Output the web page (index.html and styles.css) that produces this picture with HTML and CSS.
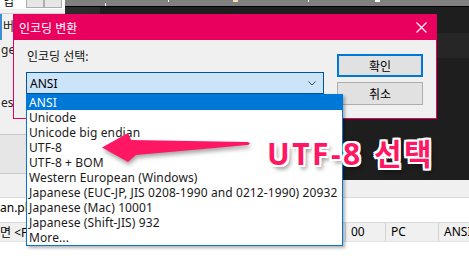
FILE: index.html
```html
<!DOCTYPE html>
<html lang="ko">
<head>
    <meta charset="UTF-8">
    <title>인코딩 변환</title>
    <link rel="stylesheet" href="styles.css">
</head>
<body>
    <div class="screen">
        <div class="workspace">
            <aside class="sidebar">
                <div class="sb-top">
                    <span class="sb-tab">업</span>
                    <span class="sb-btn"></span>
                    <span class="sb-btn"></span>
                </div>
                <div class="sb-bar"></div>
                <div class="sb-item sb-sel">버</div>
                <div class="sb-item">ges</div>
                <div class="sb-item sb-low">es</div>
                <div class="sb-split"></div>
                <div class="sb-rest"></div>
            </aside>
            <section class="editor">
                <div class="ruler"></div>
                <div class="code">
                    <div class="gutter"></div>
                    <div class="lines">
                        <div class="line"></div>
                        <div class="line line-current"></div>
                    </div>
                </div>
            </section>
        </div>
        <div class="tabstrip"></div>
        <div class="filebar"><span>an.php</span></div>
        <div class="statusbar">
            <span class="st-left">면 &lt;F</span>
            <span class="st-cell st-pos">00</span>
            <span class="st-cell st-eol">PC</span>
            <span class="st-cell st-enc">ANSI</span>
        </div>
    </div>

    <div class="dialog">
        <div class="dlg-title">
            <span>인코딩 변환</span>
            <svg class="dlg-close" width="11" height="11" viewBox="0 0 11 11">
                <path d="M0.5 0.5 L10.5 10.5 M10.5 0.5 L0.5 10.5" stroke="#fff" stroke-width="1.1" fill="none"/>
            </svg>
        </div>
        <div class="dlg-body">
            <div class="dlg-main">
                <div class="dlg-label">인코딩 선택:</div>
                <div class="combo">
                    <span>ANSI</span>
                    <svg class="combo-arrow" width="8" height="5" viewBox="0 0 8 5">
                        <path d="M0.5 0.5 L4 4 L7.5 0.5" stroke="#444" stroke-width="1" fill="none"/>
                    </svg>
                </div>
            </div>
            <div class="dlg-actions">
                <button class="btn btn-default">확인</button>
                <button class="btn">취소</button>
            </div>
        </div>
    </div>

    <ul class="dropdown">
        <li class="selected">ANSI</li>
        <li>Unicode</li>
        <li>Unicode big endian</li>
        <li>UTF-8</li>
        <li>UTF-8 + BOM</li>
        <li>Western European (Windows)</li>
        <li>Japanese (EUC-JP, JIS 0208-1990 and 0212-1990) 20932</li>
        <li>Japanese (Mac) 10001</li>
        <li>Japanese (Shift-JIS) 932</li>
        <li>More...</li>
    </ul>

    <svg class="arrow" width="160" height="45" viewBox="95 125 160 45">
        <path d="M102 147.5 L128 133 L131 140 L248 142 L250 143.5 L248 145 L136 155 L128 162 Z" fill="#ff1763"/>
    </svg>

    <div class="callout">UTF-8 선택</div>
</body>
</html>
```

FILE: styles.css
```css
body {
    margin: 0;
    width: 469px;
    height: 266px;
    overflow: hidden;
    position: relative;
    background: #fff;
    font-family: "Noto Sans", "Noto Sans CJK KR", sans-serif;
    font-size: 12px;
    color: #000;
}
.screen {
    display: flex;
    flex-direction: column;
    height: 100%;
}
.workspace {
    display: flex;
    height: 180px;
}

/* left panel of the host app */
.sidebar {
    width: 65px;
    display: flex;
    flex-direction: column;
    background: #f0f0f0;
    overflow: hidden;
}
.sb-top {
    height: 9px;
    display: flex;
    align-items: flex-end;
    background: #fff;
    overflow: hidden;
}
.sb-tab {
    width: 26px;
    height: 9px;
    line-height: 4px;
    padding-left: 3px;
    box-sizing: border-box;
    overflow: hidden;
}
.sb-btn {
    width: 18px;
    height: 8px;
    margin-bottom: 1px;
    background: #e6e6e6;
    border: 1px solid #adadad;
    border-top: none;
    box-sizing: border-box;
}
.sb-bar {
    height: 5px;
    border-bottom: 1px solid #d0d0d0;
    box-sizing: border-box;
}
.sb-item {
    height: 20px;
    line-height: 20px;
    padding-left: 1px;
    color: #222;
}
.sb-sel {
    height: 26px;
    line-height: 26px;
    border-left: 2px solid #3c8dd6;
}
.sb-low {
    margin-top: 34px;
    height: 17px;
    line-height: 17px;
}
.sb-split {
    margin-top: 23px;
    height: 38px;
    background: #e6e6e6;
    border-top: 1px solid #c8c8c8;
    border-bottom: 1px solid #c8c8c8;
}
.sb-rest {
    flex: 1;
}

/* dark editor */
.editor {
    flex: 1;
    display: flex;
    flex-direction: column;
    background: #1e1e1e;
}
.ruler {
    height: 6px;
    border-bottom: 1px solid #000;
    background-color: #808080;
    background-image:
        linear-gradient(#fff, #fff),
        linear-gradient(#fff, #fff),
        linear-gradient(#ffd9a8, #ffd9a8),
        linear-gradient(#fff, #fff),
        linear-gradient(#fff, #fff);
    background-size: 1px 3px, 1px 2px, 5px 2px, 1px 2px, 5px 2px;
    background-position: 40px 3px, 103px 0, 168px 0, 243px 0, 310px 0;
    background-repeat: no-repeat;
}
.code {
    flex: 1;
    display: flex;
}
.gutter {
    width: 35px;
    background: #2b2b2b;
}
.lines {
    flex: 1;
    overflow: hidden;
}
.line {
    height: 26px;
}
.line-current {
    height: 25px;
    background: #262626;
}

/* bottom strips */
.tabstrip {
    height: 17px;
    background: #f0f0f0;
    border-bottom: 1px solid #dadada;
}
.filebar {
    height: 24px;
    line-height: 20px;
    background: #fff;
    white-space: nowrap;
}
.statusbar {
    height: 18px;
    display: flex;
    align-items: center;
    background: #f0f0f0;
    border-top: 1px solid #d9d9d9;
    border-bottom: 1px solid #e3e3e3;
    white-space: nowrap;
}
.st-left {
    flex: 1;
}
.st-cell {
    height: 100%;
    line-height: 18px;
    padding-left: 5px;
    border-left: 1px solid #d2d2d2;
    box-sizing: border-box;
}
.st-pos { width: 40px; }
.st-eol { width: 53px; }
.st-enc { width: 31px; }

/* dialog window floating over the app */
.dialog {
    position: absolute;
    left: 13px;
    top: 14px;
    width: 424px;
    height: 105px;
    box-sizing: border-box;
    border: 1px solid #e9005e;
    display: flex;
    flex-direction: column;
}
.dlg-title {
    height: 25px;
    background: #e9005e;
    color: #fff;
    display: flex;
    align-items: center;
    justify-content: space-between;
    padding: 0 9px 0 5px;
}
.dlg-close {
    display: block;
}
.dlg-body {
    flex: 1;
    background: #f0f0f0;
    display: flex;
    gap: 13px;
    padding: 9px 13px 0 12px;
}
.dlg-main {
    flex: 1;
}
.dlg-label {
    height: 16px;
    line-height: 16px;
    margin-bottom: 7px;
    padding-left: 1px;
    color: #111;
}
.combo {
    height: 22px;
    box-sizing: border-box;
    border: 1px solid #005499;
    background: #cce4f7;
    display: flex;
    align-items: center;
    justify-content: space-between;
    padding: 0 7px 0 3px;
}
.dlg-actions {
    width: 86px;
    margin-top: 5px;
    display: flex;
    flex-direction: column;
    gap: 5px;
}
.btn {
    height: 23px;
    padding: 0;
    background: #e1e1e1;
    border: 1px solid #adadad;
    font-family: inherit;
    font-size: 12px;
    color: #000;
}
.btn-default {
    border: 2px solid #0078d7;
}

/* open combo list */
.dropdown {
    position: absolute;
    left: 26px;
    top: 94px;
    width: 315px;
    margin: 0;
    padding: 0;
    list-style: none;
    background: #fff;
    border: 1px solid #0078d7;
    box-shadow: 2px 2px 3px rgba(0, 0, 0, 0.3);
    color: #1a1a1a;
    letter-spacing: 0.1px;
}
.dropdown li {
    height: 15px;
    line-height: 15px;
    padding-left: 2px;
    white-space: nowrap;
}
.dropdown .selected {
    background: #0078d7;
    color: #fff;
}

/* annotation */
.arrow {
    position: absolute;
    left: 95px;
    top: 125px;
    filter: drop-shadow(1px 3px 2px rgba(0, 0, 0, 0.35));
}
.callout {
    position: absolute;
    left: 267px;
    top: 136px;
    font-family: "Noto Sans", "Noto Sans CJK KR", sans-serif;
    font-weight: 700;
    font-size: 30px;
    line-height: 36px;
    letter-spacing: 2.5px;
    word-spacing: 1px;
    color: #ff1763;
    white-space: nowrap;
    text-shadow:
        2px 0 0 #fff, -2px 0 0 #fff, 0 2px 0 #fff, 0 -2px 0 #fff,
        2px 2px 0 #fff, -2px -2px 0 #fff, 2px -2px 0 #fff, -2px 2px 0 #fff,
        3px 4px 4px rgba(0, 0, 0, 0.45);
}
```
